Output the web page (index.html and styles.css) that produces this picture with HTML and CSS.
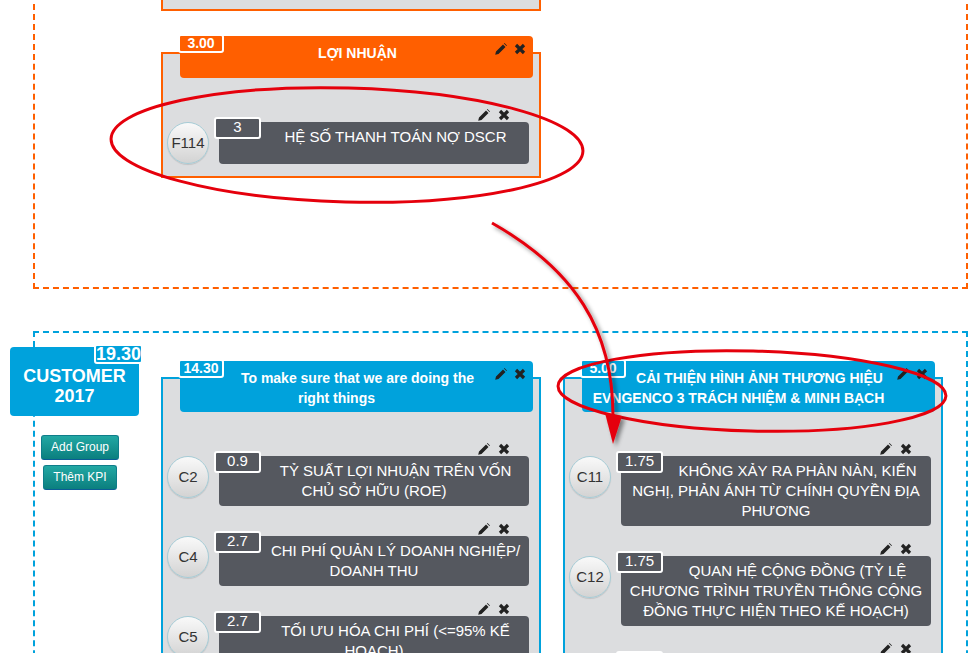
FILE: index.html
```html
<!DOCTYPE html>
<html lang="vi">
<head>
<meta charset="utf-8">
<title>KPI Map</title>
<link rel="stylesheet" href="styles.css">
</head>
<body>
<svg class="defs" aria-hidden="true">
  <symbol id="i-pencil" viewBox="0 0 12 12">
    <path d="M0.2 11.8 L1 8.5 L8 1.5 L10.5 4 L3.5 11 Z M8.9 0.6 L9.5 0 L12 2.5 L11.4 3.1 Z"/>
  </symbol>
  <symbol id="i-times" viewBox="0 0 12 12">
    <path d="M2 2 L10 10 M10 2 L2 10" fill="none" stroke="currentColor" stroke-width="3.2"/>
  </symbol>
</svg>

<section class="persp persp-orange">
  <div class="side"></div>
  <div class="col">
    <div class="group group-orange group-stub"></div>
    <div class="group group-orange">
      <div class="group-head">
        <span class="group-score">3.00</span>LỢI NHUẬN
        <span class="tools"><svg class="ic"><use href="#i-pencil"/></svg><svg class="ic"><use href="#i-times"/></svg></span>
      </div>
      <div class="kpis">
        <div class="kpi">
          <div class="kpi-tools"><svg class="ic"><use href="#i-pencil"/></svg><svg class="ic"><use href="#i-times"/></svg></div>
          <div class="kpi-row">
            <div class="kpi-code">F114</div>
            <div class="kpi-box"><span class="kpi-score">3</span>HỆ SỐ THANH TOÁN NỢ DSCR</div>
          </div>
        </div>
      </div>
    </div>
  </div>
  <div class="col"></div>
</section>

<section class="persp persp-blue">
  <div class="side">
    <div class="persp-title">CUSTOMER<br>2017<span class="persp-score">19.30</span></div>
    <button class="btn">Add Group</button>
    <button class="btn btn-second">Thêm KPI</button>
  </div>
  <div class="col">
    <div class="group group-blue">
      <div class="group-head">
        <span class="group-score">14.30</span>To make sure that we are doing the right things
        <span class="tools"><svg class="ic"><use href="#i-pencil"/></svg><svg class="ic"><use href="#i-times"/></svg></span>
      </div>
      <div class="kpis">
        <div class="kpi">
          <div class="kpi-tools"><svg class="ic"><use href="#i-pencil"/></svg><svg class="ic"><use href="#i-times"/></svg></div>
          <div class="kpi-row">
            <div class="kpi-code">C2</div>
            <div class="kpi-box"><span class="kpi-score">0.9</span>TỶ SUẤT LỢI NHUẬN TRÊN VỐN CHỦ SỞ HỮU (ROE)</div>
          </div>
        </div>
        <div class="kpi">
          <div class="kpi-tools"><svg class="ic"><use href="#i-pencil"/></svg><svg class="ic"><use href="#i-times"/></svg></div>
          <div class="kpi-row">
            <div class="kpi-code">C4</div>
            <div class="kpi-box"><span class="kpi-score">2.7</span>CHI PHÍ QUẢN LÝ DOANH NGHIỆP/<wbr>DOANH THU</div>
          </div>
        </div>
        <div class="kpi">
          <div class="kpi-tools"><svg class="ic"><use href="#i-pencil"/></svg><svg class="ic"><use href="#i-times"/></svg></div>
          <div class="kpi-row">
            <div class="kpi-code">C5</div>
            <div class="kpi-box"><span class="kpi-score">2.7</span>TỐI ƯU HÓA CHI PHÍ (&lt;=95% KẾ HOẠCH)</div>
          </div>
        </div>
      </div>
    </div>
  </div>
  <div class="col">
    <div class="group group-blue">
      <div class="group-head">
        <span class="group-score">5.00</span>CẢI THIỆN HÌNH ẢNH THƯƠNG HIỆU EVNGENCO 3 TRÁCH NHIỆM &amp; MINH BẠCH
        <span class="tools"><svg class="ic"><use href="#i-pencil"/></svg><svg class="ic"><use href="#i-times"/></svg></span>
      </div>
      <div class="kpis">
        <div class="kpi">
          <div class="kpi-tools"><svg class="ic"><use href="#i-pencil"/></svg><svg class="ic"><use href="#i-times"/></svg></div>
          <div class="kpi-row">
            <div class="kpi-code">C11</div>
            <div class="kpi-box"><span class="kpi-score">1.75</span>KHÔNG XẢY RA PHÀN NÀN, KIẾN NGHỊ, PHẢN ÁNH TỪ CHÍNH QUYỀN ĐỊA PHƯƠNG</div>
          </div>
        </div>
        <div class="kpi">
          <div class="kpi-tools"><svg class="ic"><use href="#i-pencil"/></svg><svg class="ic"><use href="#i-times"/></svg></div>
          <div class="kpi-row">
            <div class="kpi-code">C12</div>
            <div class="kpi-box"><span class="kpi-score">1.75</span>QUAN HỆ CỘNG ĐỒNG (TỶ LỆ CHƯƠNG TRÌNH TRUYỀN THÔNG CỘNG ĐỒNG THỰC HIỆN THEO KẾ HOẠCH)</div>
          </div>
        </div>
        <div class="kpi">
          <div class="kpi-tools"><svg class="ic"><use href="#i-pencil"/></svg><svg class="ic"><use href="#i-times"/></svg></div>
          <div class="kpi-row">
            <div class="kpi-code">C13</div>
            <div class="kpi-box"><span class="kpi-score">1.5</span>MỨC ĐỘ HÀI LÒNG CỦA KHÁCH HÀNG</div>
          </div>
        </div>
      </div>
    </div>
  </div>
</section>

<svg class="annot" width="971" height="653" viewBox="0 0 971 653" aria-hidden="true">
  <defs>
    <filter id="sh" x="-30%" y="-10%" width="160%" height="130%">
      <feDropShadow dx="3" dy="3" stdDeviation="2" flood-color="#000" flood-opacity="0.45"/>
    </filter>
  </defs>
  <ellipse cx="347" cy="145" rx="236" ry="57" transform="rotate(1.5 347 145)" fill="none" stroke="#e5000c" stroke-width="3"/>
  <ellipse cx="752" cy="391" rx="194" ry="40" transform="rotate(1.5 752 391)" fill="none" stroke="#e5000c" stroke-width="3"/>
  <g filter="url(#sh)">
    <path d="M492 223 C575 270 613 330 613 416" fill="none" stroke="#e5000c" stroke-width="3"/>
    <polygon points="605,413 622,416 613,444" fill="#e5000c"/>
  </g>
</svg>
</body>
</html>
```

FILE: styles.css
```css
html, body {
  margin: 0;
  padding: 0;
}

body {
  background: #ffffff;
  font-family: "Liberation Sans", Arial, sans-serif;
  overflow: hidden;
}

.defs {
  position: absolute;
  width: 0;
  height: 0;
  overflow: hidden;
}

.annot {
  position: absolute;
  top: 0;
  left: 0;
  z-index: 10;
  pointer-events: none;
}

/* perspective containers */
.persp {
  display: flex;
  gap: 11px;
  margin: 0 3px 0 33px;
  padding: 14px 0;
  border: 2px dashed;
}

.persp-orange {
  margin-top: -235px;
  padding-bottom: 109px;
  border-color: #ff5f00;
}

.persp-blue {
  margin-top: 42px;
  border-color: #00a2dc;
}

.side {
  flex: none;
  width: 140px;
  margin-left: -25px;
  display: flex;
  flex-direction: column;
  align-items: center;
}

.persp-title {
  position: relative;
  align-self: flex-start;
  width: 129px;
  box-sizing: border-box;
  padding: 19px 0 10px;
  background: #00a2dc;
  border-radius: 4px;
  color: #fff;
  font-weight: bold;
  font-size: 18px;
  line-height: 20px;
  text-align: center;
}

.persp-score {
  position: absolute;
  top: -3px;
  right: -4px;
  width: 49px;
  height: 20px;
  box-sizing: border-box;
  border: 2px solid #fff;
  border-radius: 3px;
  background: #00a2dc;
  font-size: 18px;
  line-height: 16px;
  text-align: center;
}

.btn {
  display: block;
  height: 25px;
  margin-top: 19px;
  padding: 0 9px;
  box-sizing: border-box;
  border: 1px solid #0f7d8a;
  border-bottom-color: #0b5c96;
  border-radius: 3px;
  background: linear-gradient(#22a8a4, #0b7f7e);
  color: #fff;
  font-family: "Liberation Sans", Arial, sans-serif;
  font-size: 12px;
  line-height: 23px;
}

.btn-second {
  margin-top: 5px;
}

/* group columns */
.col {
  flex: none;
  width: 380px;
}

.col + .col {
  margin-left: 11px;
}

.group {
  margin-top: 30px;
  padding-bottom: 12px;
  border: 2px solid;
  background: #dcdddf;
}

.group + .group {
  margin-top: 41px;
}

.group-stub {
  height: 200px;
  box-sizing: border-box;
}

.group-orange {
  border-color: #ff5f00;
}

.group-blue {
  border-color: #00a2dc;
}

.group-head {
  position: relative;
  margin: -18px 6px 0 17px;
  min-height: 42px;
  box-sizing: border-box;
  padding: 7px 45px 4px 5px;
  border-radius: 4px;
  color: #fff;
  font-weight: bold;
  font-size: 14px;
  line-height: 20px;
  text-align: center;
}

.group-orange .group-head {
  background: #ff5f00;
}

.group-blue .group-head {
  background: #00a2dc;
}

.group-score {
  float: left;
  width: 46px;
  height: 19px;
  box-sizing: border-box;
  margin: -9px 3px 0 -7px;
  border: 2px solid #fff;
  border-radius: 3px;
  background: inherit;
  font-size: 14px;
  line-height: 15px;
  text-align: center;
}

.tools {
  position: absolute;
  top: 7px;
  right: 7px;
  display: flex;
  gap: 7px;
}

.ic {
  display: block;
  width: 12px;
  height: 12px;
  fill: #222;
  color: #222;
}

/* KPIs */
.kpis {
  padding-top: 14px;
}

.kpi {
  margin-top: 15px;
}

.kpi-tools {
  display: flex;
  justify-content: flex-end;
  align-items: flex-start;
  gap: 8px;
  height: 15px;
  box-sizing: border-box;
  padding: 2px 29px 0 0;
}

.kpi-row {
  display: flex;
  align-items: flex-start;
  margin: 0 10px 0 4px;
}

.kpi-code {
  flex: none;
  width: 42px;
  height: 42px;
  box-sizing: border-box;
  margin-right: 10px;
  border: 1px solid #a6ccd6;
  border-radius: 50%;
  background: linear-gradient(#f9f9f9, #d3d3d3);
  box-shadow: 0 1px 1px rgba(0, 0, 0, 0.12);
  color: #333;
  font-size: 15px;
  line-height: 40px;
  text-align: center;
}

.kpi-box {
  flex: 1;
  min-height: 42px;
  box-sizing: border-box;
  padding: 5px 7px;
  border-radius: 4px;
  background: #55585f;
  color: #fff;
  font-size: 15px;
  line-height: 20px;
  text-align: center;
}

.kpi-score {
  float: left;
  width: 47px;
  height: 22px;
  box-sizing: border-box;
  margin: -10px 8px 0 -12px;
  border: 2px solid #fff;
  border-radius: 3px;
  background: #55585f;
  line-height: 16px;
  text-align: center;
}
```
